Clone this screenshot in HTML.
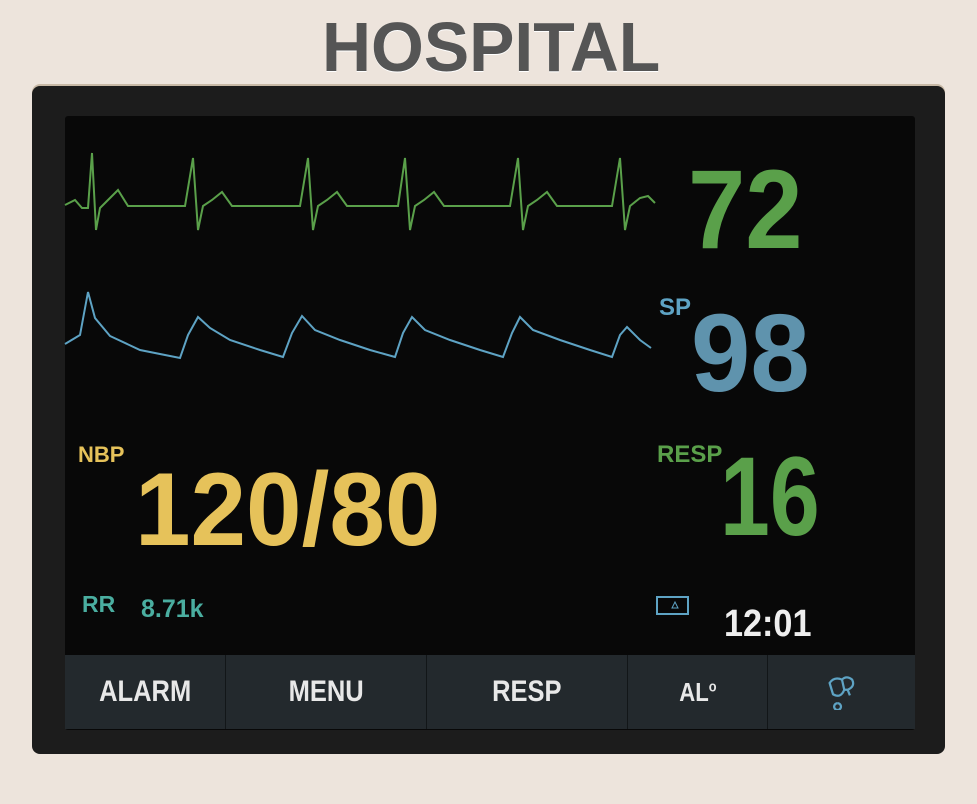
<!DOCTYPE html>
<html><head><style>
body{margin:0;width:977px;height:804px;background:#ede4dc;overflow:hidden;position:relative;font-family:"Liberation Sans",sans-serif}
.t{position:absolute;font-weight:bold;white-space:nowrap;line-height:1}
#bez{position:absolute;left:32px;top:86px;width:913px;height:668px;background:#1c1c1c;border-radius:8px;box-shadow:0 -2px 0 #c8b9a6}
#scr{position:absolute;left:65px;top:116px;width:850px;height:614px;background:#080808;border-radius:3px}
.b{position:absolute;top:655px;height:74px;background:#23292d;border-right:1px solid #121618;color:#e8e8e8;font-weight:bold;font-size:30px;display:flex;align-items:center;justify-content:center}
.b span{display:inline-block;transform:scaleX(0.85)}
</style></head><body>
<div class="t" style="left:322px;top:12px;font-size:70px;color:#555;transform:scaleX(0.97);transform-origin:left;text-shadow:0 1px 0 #fff">HOSPITAL</div>
<div id="bez"></div>
<div id="scr"></div>
<svg style="position:absolute;left:0;top:0" width="977" height="804">
<polyline fill="none" stroke="#5aa04a" stroke-width="2" points="65,205 75,200 82,208 88,208 92,153 96,230 100,208 108,200 118,190 128,206 185,206 193,158 198,230 203,206 212,200 222,192 232,206 300,206 308,158 313,230 318,206 327,200 337,192 347,206 398,206 405,158 410,230 415,206 424,200 434,192 444,206 510,206 518,158 523,230 528,206 537,200 547,192 557,206 612,206 620,158 625,230 630,206 640,198 648,196 655,203"/>
<polyline fill="none" stroke="#5ea3c4" stroke-width="2" points="65,344 80,335 88,292 95,318 110,336 140,350 165,355 180,358 188,335 198,317 210,328 230,340 260,350 283,357 292,333 302,316 315,330 340,340 370,350 395,357 403,333 412,317 425,330 450,340 480,350 503,357 512,333 520,317 533,330 560,340 590,350 612,357 620,335 627,327 640,340 651,348"/>
<rect x="657" y="597" width="31" height="17" fill="none" stroke="#5ea3c4" stroke-width="2"/>
<path d="M672 608 L675 602 L678 608 Z" fill="none" stroke="#5ea3c4" stroke-width="1"/>
</svg>
<div class="t" style="left:688px;top:154px;font-size:112px;color:#5aa04a;transform:scaleX(0.92);transform-origin:left">72</div>
<div class="t" style="left:659px;top:296px;font-size:24px;color:#5ea3c4">SP</div>
<div class="t" style="left:691px;top:299px;font-size:110px;color:#5f93ad;transform:scaleX(0.97);transform-origin:left">98</div>
<div class="t" style="left:657px;top:443px;font-size:24px;color:#5aa04a">RESP</div>
<div class="t" style="left:720px;top:441px;font-size:112px;color:#5aa04a;transform:scaleX(0.8);transform-origin:left">16</div>
<div class="t" style="left:78px;top:444px;font-size:22px;color:#e6c25a">NBP</div>
<div class="t" style="left:135px;top:458px;font-size:104px;color:#e6c25a;transform:scaleX(0.96);transform-origin:left">120/80</div>
<div class="t" style="left:82px;top:593px;font-size:23px;color:#4aaea0">RR</div>
<div class="t" style="left:141px;top:597px;font-size:25px;color:#4aaea0">8.71k</div>
<div class="t" style="left:724px;top:605px;font-size:38px;color:#eee;transform:scaleX(0.9);transform-origin:left">12:01</div>
<div class="b" style="left:65px;width:160px"><span>ALARM</span></div>
<div class="b" style="left:226px;width:200px"><span>MENU</span></div>
<div class="b" style="left:427px;width:200px"><span>RESP</span></div>
<div class="b" style="left:628px;width:139px;font-size:26px"><span>AL<sup style="font-size:15px">o</sup></span></div>
<div class="b" style="left:768px;width:147px;border-right:none"><svg width="34" height="36" viewBox="0 0 30 32"><path d="M4 8 Q8 2 15 5 L17 14 Q14 22 7 18 Z M15 5 Q19 1 24 5 Q27 11 20 14 L17 14 M11 26 a3 3 0 1 0 0.1 0 M20 14 L22 19" fill="none" stroke="#5ea3c4" stroke-width="2"/></svg></div>
</body></html>
